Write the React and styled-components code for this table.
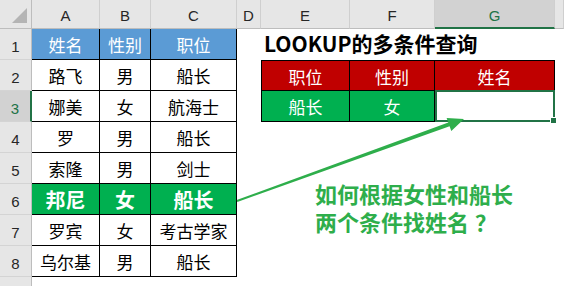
import React from "react";
import styled, { createGlobalStyle } from "styled-components";

const GlobalStyle = createGlobalStyle`
  html, body {
    margin: 0;
    padding: 0;
    background: #fff;
    overflow: hidden;
  }
  body {
    font-family: "Noto Sans CJK SC", "Liberation Sans", sans-serif;
  }
`;

const SELECT_GREEN = "#217346";

const Sheet = styled.div`
  position: relative;
  display: grid;
  grid-template-columns: 32px 68px 51px 86px 24px 89px 85px 120px 1fr;
  grid-template-rows: 29px repeat(9, 31px);
  width: 564px;
  height: 286px;
  overflow: hidden;
  background: #fff;
`;

const Corner = styled.div`
  display: flex;
  align-items: flex-end;
  justify-content: flex-end;
  padding: 0 3px 4px 0;
  background: #e6e6e6;
  border-right: 1px solid #bdbdbd;
  border-bottom: 1px solid #bdbdbd;
`;

const ColHead = styled.div`
  display: flex;
  align-items: flex-end;
  justify-content: center;
  padding-bottom: ${(p) => (p.$sel ? "3px" : "4px")};
  background: ${(p) => (p.$sel ? "#d2d2d2" : "#e6e6e6")};
  color: ${(p) => (p.$sel ? SELECT_GREEN : "#262626")};
  border-right: 1px solid #cfcfcf;
  border-bottom: ${(p) => (p.$sel ? `2px solid ${SELECT_GREEN}` : "1px solid #bdbdbd")};
  font-family: "Liberation Sans", sans-serif;
  font-size: 15px;
`;

const RowHead = styled.div`
  display: flex;
  align-items: flex-end;
  justify-content: center;
  padding-bottom: 4px;
  background: ${(p) => (p.$sel ? "#d2d2d2" : "#e6e6e6")};
  color: ${(p) => (p.$sel ? SELECT_GREEN : "#262626")};
  border-bottom: 1px solid #d4d4d4;
  border-right: ${(p) => (p.$sel ? `2px solid ${SELECT_GREEN}` : "1px solid #bdbdbd")};
  font-family: "Liberation Sans", sans-serif;
  font-size: 15px;
`;

const Blank = styled.div``;

const Cell = styled.div`
  display: flex;
  align-items: center;
  justify-content: center;
  padding-top: 1px;
  background: ${(p) => p.$bg || "#fff"};
  color: ${(p) => p.$fg || "#000"};
  font-weight: ${(p) => (p.$bold ? 700 : 400)};
  font-size: ${(p) => p.$size || 17}px;
  border-right: 1px solid #000;
  border-bottom: 1px solid #000;
  border-top: ${(p) => (p.$top ? "1px solid #000" : "none")};
  border-left: ${(p) => (p.$left ? "1px solid #000" : "none")};
  white-space: nowrap;
`;

const ActiveCell = styled.div`
  position: relative;
  border: 2px solid ${SELECT_GREEN};
  margin: -1px 0 0 0;
  background: #fff;

  &::after {
    content: "";
    position: absolute;
    right: -4px;
    bottom: -4px;
    width: 5px;
    height: 5px;
    background: ${SELECT_GREEN};
    border: 1px solid #fff;
  }
`;

const Title = styled.div`
  grid-column: span 3;
  display: flex;
  align-items: flex-end;
  padding: 0 0 2px 3px;
  font-size: 21px;
  font-weight: 700;
  color: #000;
  white-space: nowrap;
`;

const Drawing = styled.svg`
  position: absolute;
  left: 0;
  top: 0;
  pointer-events: none;
`;

const Note = styled.div`
  position: absolute;
  left: 315px;
  top: 180px;
  display: flex;
  flex-direction: column;
  gap: 2px;
  font-size: 22px;
  line-height: 26px;
  font-weight: 700;
  color: #2eae4b;
  white-space: nowrap;
`;

const Mark = styled.span`
  padding-left: 6px;
`;

const COLS = ["A", "B", "C", "D", "E", "F", "G"];

const people = [
  ["路飞", "男", "船长"],
  ["娜美", "女", "航海士"],
  ["罗", "男", "船长"],
  ["索隆", "男", "剑士"],
  ["邦尼", "女", "船长"],
  ["罗宾", "女", "考古学家"],
  ["乌尔基", "男", "船长"],
];

function SelectAll() {
  return (
    <svg width="16" height="16" viewBox="0 0 16 16">
      <polygon points="15,0 15,15 0,15" fill="#b4b4b4" />
    </svg>
  );
}

function PeopleRow({ row, hit }) {
  return row.map((v, i) =>
    hit ? (
      <Cell key={i} $bg="#00b050" $fg="#fff" $bold $size={20}>
        {v}
      </Cell>
    ) : (
      <Cell key={i}>{v}</Cell>
    )
  );
}

function LookupRow({ n }) {
  if (n === 2) {
    return (
      <>
        <Cell $bg="#c00000" $fg="#fff" $top $left>职位</Cell>
        <Cell $bg="#c00000" $fg="#fff" $top>性别</Cell>
        <Cell $bg="#c00000" $fg="#fff" $top>姓名</Cell>
      </>
    );
  }
  if (n === 3) {
    return (
      <>
        <Cell $bg="#00b050" $fg="#fff" $left>船长</Cell>
        <Cell $bg="#00b050" $fg="#fff">女</Cell>
        <ActiveCell />
      </>
    );
  }
  return (
    <>
      <Blank />
      <Blank />
      <Blank />
    </>
  );
}

export default function App() {
  const rows = [2, 3, 4, 5, 6, 7, 8];
  return (
    <>
      <GlobalStyle />
      <Sheet>
        <Corner>
          <SelectAll />
        </Corner>
        {COLS.map((c) => (
          <ColHead key={c} $sel={c === "G"}>
            {c}
          </ColHead>
        ))}
        <ColHead />

        <RowHead>1</RowHead>
        <Cell $bg="#5b9bd5" $fg="#fff">姓名</Cell>
        <Cell $bg="#5b9bd5" $fg="#fff">性别</Cell>
        <Cell $bg="#5b9bd5" $fg="#fff">职位</Cell>
        <Blank />
        <Title>LOOKUP的多条件查询</Title>
        <Blank />

        {rows.map((n, i) => (
          <React.Fragment key={n}>
            <RowHead $sel={n === 3}>{n}</RowHead>
            <PeopleRow row={people[i]} hit={n === 6} />
            <Blank />
            <LookupRow n={n} />
            <Blank />
          </React.Fragment>
        ))}

        <RowHead>9</RowHead>

        <Drawing width="564" height="286" viewBox="0 0 564 286">
          <polygon
            points="237.3,201.9 236.7,200.1 448.3,122.6 446.6,117.9 464,119 451.3,131 449.6,126.3"
            fill="#2eae4b"
          />
        </Drawing>
        <Note>
          <span>如何根据女性和船长</span>
          <span>
            两个条件找姓名<Mark>？</Mark>
          </span>
        </Note>
      </Sheet>
    </>
  );
}
